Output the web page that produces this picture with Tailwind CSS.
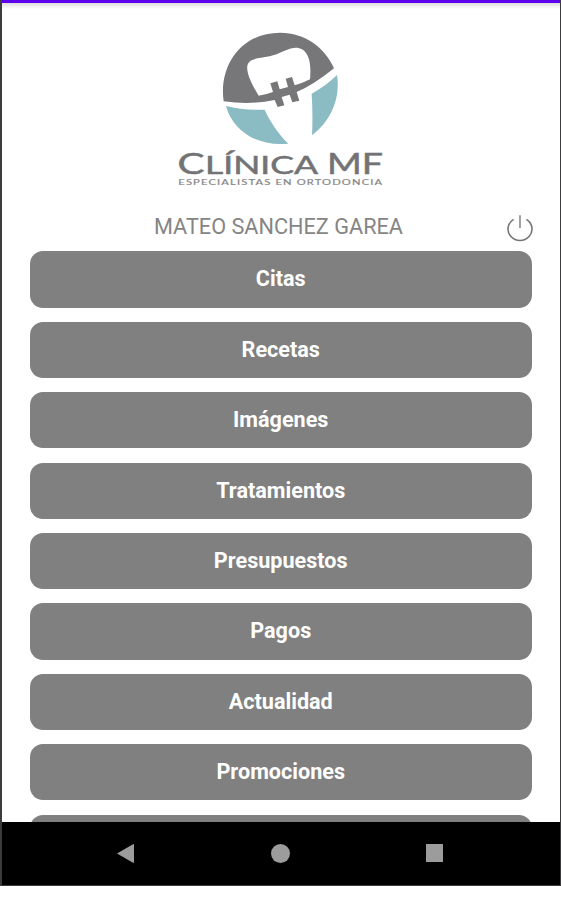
<!DOCTYPE html>
<html lang="es">
<head>
<meta charset="utf-8">
<title>Clínica MF</title>
<script src="https://cdn.jsdelivr.net/npm/@tailwindcss/browser@4"></script>
</head>
<body class="bg-white overflow-hidden font-[Roboto,sans-serif]">
<div class="w-[561px] h-[886px] flex flex-col overflow-hidden border-l-2 border-r border-b border-[#3c3c3e]">
  <div class="h-[3px] shrink-0 bg-[#5d00ee]"></div>
  <main class="h-[819px] shrink-0 overflow-hidden bg-linear-to-b from-[#dedede] to-white to-[6px] flex flex-col">
    <header class="h-[187px] shrink-0 flex flex-col items-center pt-[22px] pr-[3px]">
      <svg class="w-[140px] h-[122px] shrink-0" viewBox="0 0 420 366">
        <path fill="#777779" d="M41 229C26 124 91 23 211 23C284 23 346 68 372 130Q309 181 260 201L268 227L247 232L239 209L215 216L223 241L203 246L194 225Q125 240 41 229Z"/>
        <path fill="#fff" d="M146 212C130 186 108 146 112 122C118 98 145 101 179 94C210 88 238 65 265 69C300 75 304 123 300 163Q279 174 254 181L246 156L227 161L234 186L209 193L202 169L181 175L189 201Q168 209 146 212Z"/>
        <path fill="#8bbcc4" d="M48 243Q101 256 164 254C180 289 205 327 235 356C145 366 69 320 48 243ZM381 150C392 217 365 287 306 331Q309 270 305 206Q349 182 381 150Z"/>
      </svg>
      <svg class="w-[220px] h-[42px] shrink-0" viewBox="0 0 220 42" font-family="Lato, sans-serif" fill="#737375" stroke="#737375" stroke-width=".5">
        <text x="7.5" y="27.2" textLength="27" lengthAdjust="spacingAndGlyphs" font-size="28">C</text>
        <text x="35" y="27.2" textLength="113" lengthAdjust="spacingAndGlyphs" font-size="24.8">LÍNICA</text>
        <text x="157" y="27.2" textLength="56" lengthAdjust="spacingAndGlyphs" font-size="28">MF</text>
        <text x="8.3" y="37.6" font-size="6.8" letter-spacing=".7" fill="#858587" stroke="#858587" stroke-width=".15" textLength="205" lengthAdjust="spacingAndGlyphs">ESPECIALISTAS EN ORTODONCIA</text>
      </svg>
    </header>
    <div class="h-[61.4px] shrink-0 flex items-start justify-between pt-[22px] pl-[152px] pr-[27px]">
      <h1><svg class="w-[250px] h-[28px] block" viewBox="0 0 250 28"><text x="0" y="21.5" font-size="21.6" fill="#858585" textLength="249" lengthAdjust="spacingAndGlyphs">MATEO SANCHEZ GAREA</text></svg></h1>
      <svg class="w-[26px] h-[28px] mt-[2px]" viewBox="0 0 26 28" fill="none" stroke="#747474" stroke-width="1.6"><path d="M6.6 5.4A12 11.4 0 1 0 19.4 5.4"/><path d="M13 1.2V14" stroke="#888"/></svg>
    </div>
    <nav class="flex flex-col gap-[14.1px] pl-[27.5px] pr-[28px] text-white text-[21.6px] font-bold text-center leading-[55.6px]">
      <div class="h-[56.3px] shrink-0 rounded-[13px] bg-[#808080]">Citas</div>
      <div class="h-[56.3px] shrink-0 rounded-[13px] bg-[#808080]">Recetas</div>
      <div class="h-[56.3px] shrink-0 rounded-[13px] bg-[#808080]">Imágenes</div>
      <div class="h-[56.3px] shrink-0 rounded-[13px] bg-[#808080]">Tratamientos</div>
      <div class="h-[56.3px] shrink-0 rounded-[13px] bg-[#808080]">Presupuestos</div>
      <div class="h-[56.3px] shrink-0 rounded-[13px] bg-[#808080]">Pagos</div>
      <div class="h-[56.3px] shrink-0 rounded-[13px] bg-[#808080]">Actualidad</div>
      <div class="h-[56.3px] shrink-0 rounded-[13px] bg-[#808080]">Promociones</div>
      <div class="h-[56.3px] shrink-0 rounded-[13px] bg-[#808080]"></div>
    </nav>
  </main>
  <footer class="flex-1 bg-black flex items-start justify-between pl-[115px] pr-[117px] pt-[22px]">
    <svg class="w-[17px] h-[19px]" viewBox="0 0 17 19"><path fill="#9c9c9c" d="M0 9.5L16 0.2H17V18.8H16Z"/></svg>
    <div class="size-[19px] rounded-full bg-[#9c9c9c]"></div>
    <div class="w-[17px] h-[18px] bg-[#9c9c9c]"></div>
  </footer>
</div>
</body>
</html>
